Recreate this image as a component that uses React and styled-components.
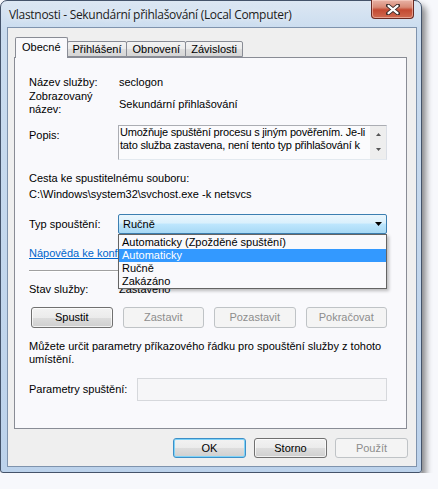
import React from 'react'
import styled, { createGlobalStyle } from 'styled-components'

const GlobalStyle = createGlobalStyle`
  html, body {
    margin: 0;
    padding: 0;
    background: #f7f8fc;
  }
  body {
    font-family: "Liberation Sans", Arial, sans-serif;
    font-size: 11px;
    color: #000;
  }
`

const Window = styled.div`
  width: 422px;
  height: 473px;
  box-sizing: border-box;
  display: flex;
  flex-direction: column;
  border: 1px solid #44536a;
  border-radius: 7px 7px 3px 3px;
  background: linear-gradient(180deg, #dce7f3 0px, #cadcef 30px, #bcd2eb 100%);
  box-shadow: 4px 5px 6px rgba(0, 0, 0, 0.45);
  padding: 0 4px 5px 6px;
`

const TitleBar = styled.div`
  height: 26px;
  display: flex;
  align-items: flex-start;
  justify-content: space-between;
`

const Title = styled.div`
  font-family: "Open Sans", "Liberation Sans", sans-serif;
  font-size: 12px;
  line-height: 16px;
  padding: 6px 0 0 2px;
  color: #1b1b1b;
  letter-spacing: -0.3px;
  white-space: nowrap;
  text-shadow: 0 0 6px rgba(255, 255, 255, 0.95);
`

const CloseButton = styled.div`
  width: 43px;
  height: 19px;
  margin: -1px 3px 0 0;
  box-sizing: border-box;
  border: 1px solid #6b2a22;
  border-top: none;
  border-radius: 0 0 4px 4px;
  background: linear-gradient(180deg, #e8b3a6 0%, #d88a76 40%, #c44a32 55%, #cf6a50 100%);
  box-shadow: inset 0 0 0 1px rgba(255, 220, 210, 0.5);
  display: flex;
  align-items: center;
  justify-content: center;
`

const Body = styled.div`
  flex: 1;
  box-sizing: border-box;
  background: #efefef;
  border: 1px solid #7f93ad;
  padding: 9px 9px 0 6px;
  display: flex;
  flex-direction: column;
`

const TabStrip = styled.div`
  height: 20px;
  display: flex;
  align-items: flex-end;
  padding-left: 1px;
  position: relative;
  z-index: 2;
`

const Tab = styled.div`
  box-sizing: border-box;
  height: ${p => (p.$active ? '21px' : '16px')};
  margin: ${p => (p.$active ? '0 -1px -1px 0' : '0 -1px 0 0')};
  padding: ${p => (p.$active ? '3px 6px 0' : '1px 5px 0')};
  border: 1px solid #898c95;
  border-bottom: ${p => (p.$active ? 'none' : '1px solid #898c95')};
  border-radius: 2px 2px 0 0;
  background: ${p => (p.$active ? '#f9f9fc' : 'linear-gradient(180deg, #f3f3f3 0%, #ebebeb 50%, #dedede 51%, #d6d6d6 100%)')};
  line-height: 13px;
  position: relative;
  z-index: ${p => (p.$active ? 2 : 1)};
`

const Panel = styled.div`
  height: 372px;
  box-sizing: border-box;
  border: 1px solid #898c95;
  background: #f9f9fc;
  padding: 18px 19px 0 14px;
  display: flex;
  flex-direction: column;
  position: relative;
  z-index: 1;
  min-width: 0;
`

const Row = styled.div`
  display: grid;
  grid-template-columns: ${p => p.$label || 90}px minmax(0, 1fr);
  align-items: ${p => p.$align || 'center'};
  margin-top: ${p => p.$top || 0}px;
  line-height: 13px;
`

const Label = styled.div`
  padding-top: ${p => p.$pad || 0}px;
`

const Value = styled.div`
  padding-top: ${p => p.$pad || 0}px;
  white-space: nowrap;
`

const Line = styled.div`
  margin-top: ${p => p.$top || 0}px;
  line-height: 13px;
  white-space: nowrap;
`

const TextBox = styled.div`
  height: 35px;
  box-sizing: border-box;
  margin-left: -1px;
  border: 1px solid #abadb3;
  border-right-color: #dbdfe6;
  border-bottom-color: #e3e9ef;
  background: #fbfbfd;
  display: flex;
`

const TextLines = styled.div`
  flex: 1;
  min-width: 0;
  overflow: hidden;
  padding-left: 1px;
  line-height: 13px;
  letter-spacing: -0.2px;
  white-space: nowrap;
`

const ScrollBar = styled.div`
  width: 16px;
  background: #eeeeee;
  display: flex;
  flex-direction: column;
  justify-content: space-between;
  align-items: center;
  padding: 7px 0 8px;
  box-sizing: border-box;
`

const ComboWrap = styled.div`
  position: relative;
  margin-left: -1px;
  z-index: 5;
`

const Combo = styled.div`
  height: 20px;
  box-sizing: border-box;
  border: 1px solid #3c7fb1;
  border-radius: 2px;
  background: linear-gradient(180deg, #eaf6fd 0%, #d9f0fc 45%, #bee6fd 50%, #a7d9f5 100%);
  display: flex;
  align-items: center;
  justify-content: space-between;
  padding: 0 4px 0 4px;
  line-height: 13px;
`

const DropList = styled.div`
  position: absolute;
  left: 0;
  right: 0;
  top: 100%;
  box-sizing: border-box;
  border: 1px solid #646464;
  background: #f9f9fc;
  padding-top: 1px;
  box-shadow: 2px 2px 3px rgba(0, 0, 0, 0.25);
`

const Option = styled.div`
  height: 13px;
  line-height: 13px;
  padding-left: 3px;
  background: ${p => (p.$selected ? '#3399ff' : 'transparent')};
  color: ${p => (p.$selected ? '#fff' : '#000')};
  white-space: nowrap;
`

const Link = styled.a`
  color: #0066cc;
  text-decoration: underline;
  line-height: 13px;
  margin-top: 13px;
  white-space: nowrap;
`

const Separator = styled.div`
  height: 1px;
  margin-top: 10px;
  background: #a0a0a0;
  box-shadow: 0 1px 0 #ffffff;
`

const ButtonRow = styled.div`
  display: grid;
  grid-template-columns: repeat(4, 1fr);
  gap: 10px;
  margin-top: 11px;
  padding-left: 2px;
`

const Button = styled.div`
  height: ${p => p.$h || 21}px;
  width: ${p => (p.$w ? p.$w + 'px' : 'auto')};
  box-sizing: border-box;
  border: 1px solid ${p => (p.$disabled ? '#bfc3c6' : p.$default ? '#3d8fc7' : '#707070')};
  border-radius: 3px;
  background: ${p => (p.$disabled ? '#f4f4f4' : 'linear-gradient(180deg, #f2f2f2 0%, #ebebeb 50%, #dddddd 51%, #cfcfcf 100%)')};
  box-shadow: ${p => (p.$default ? 'inset 0 0 0 1px #7fd3f8' : p.$disabled ? 'none' : 'inset 0 0 0 1px rgba(255,255,255,0.7)')};
  color: ${p => (p.$disabled ? '#8d8d8d' : '#000')};
  display: flex;
  align-items: center;
  justify-content: center;
  line-height: 13px;
`

const ParamInput = styled.div`
  height: 23px;
  box-sizing: border-box;
  border: 1px solid #d6d8dc;
  background: #f6f6f8;
`

const Footer = styled.div`
  display: flex;
  justify-content: flex-end;
  gap: 8px;
  margin: 9px -1px 0 0;
`

const CloseGlyph = () => (
  <svg width="14" height="11" viewBox="0 0 14 11">
    <path d="M2 1.5 L12 9.5 M12 1.5 L2 9.5" stroke="#3a2a28" strokeWidth="4" strokeLinecap="round" />
    <path d="M2.5 1.8 L11.5 9.2 M11.5 1.8 L2.5 9.2" stroke="#ffffff" strokeWidth="2.2" strokeLinecap="round" />
  </svg>
)

const Arrow = ({ up, color = '#000' }) => (
  <svg width="7" height="4" viewBox="0 0 7 4">
    <polygon points={up ? '0,4 7,4 3.5,0' : '0,0 7,0 3.5,4'} fill={color} />
  </svg>
)

const SmallArrow = ({ up }) => (
  <svg width="5" height="3" viewBox="0 0 5 3">
    <polygon points={up ? '0,3 5,3 2.5,0' : '0,0 5,0 2.5,3'} fill="#555" />
  </svg>
)

const options = [
  'Automaticky (Zpožděné spuštění)',
  'Automaticky',
  'Ručně',
  'Zakázáno',
]

export default function App() {
  return (
    <>
      <GlobalStyle />
      <Window>
        <TitleBar>
          <Title>Vlastnosti - Sekundární přihlašování (Local Computer)</Title>
          <CloseButton>
            <CloseGlyph />
          </CloseButton>
        </TitleBar>
        <Body>
          <TabStrip>
            <Tab $active>Obecné</Tab>
            <Tab>Přihlášení</Tab>
            <Tab>Obnovení</Tab>
            <Tab>Závislosti</Tab>
          </TabStrip>
          <Panel>
            <Row>
              <Label>Název služby:</Label>
              <Value>seclogon</Value>
            </Row>
            <Row $top={1}>
              <Label>Zobrazovaný<br />název:</Label>
              <Value $pad={3}>Sekundární přihlašování</Value>
            </Row>
            <Row $top={9} $align="start">
              <Label $pad={4}>Popis:</Label>
              <TextBox>
                <TextLines>
                  Umožňuje spuštění procesu s jiným pověřením. Je-li<br />
                  tato služba zastavena, není tento typ přihlašování k
                </TextLines>
                <ScrollBar>
                  <SmallArrow up />
                  <SmallArrow />
                </ScrollBar>
              </TextBox>
            </Row>
            <Line $top={12}>Cesta ke spustitelnému souboru:</Line>
            <Line $top={3}>C:\Windows\system32\svchost.exe -k netsvcs</Line>
            <Row $top={13}>
              <Label>Typ spouštění:</Label>
              <ComboWrap>
                <Combo>
                  <span>Ručně</span>
                  <Arrow />
                </Combo>
                <DropList>
                  {options.map(o => (
                    <Option key={o} $selected={o === 'Automaticky'}>{o}</Option>
                  ))}
                </DropList>
              </ComboWrap>
            </Row>
            <Link>Nápověda ke konfiguraci možností spouštění služby.</Link>
            <Separator />
            <Row $top={12}>
              <Label>Stav služby:</Label>
              <Value>Zastaveno</Value>
            </Row>
            <ButtonRow>
              <Button>Spustit</Button>
              <Button $disabled>Zastavit</Button>
              <Button $disabled>Pozastavit</Button>
              <Button $disabled>Pokračovat</Button>
            </ButtonRow>
            <Line $top={12}>
              Můžete určit parametry příkazového řádku pro spouštění služby z tohoto
            </Line>
            <Line>umístění.</Line>
            <Row $top={12} $label={108}>
              <Label>Parametry spuštění:</Label>
              <ParamInput />
            </Row>
          </Panel>
          <Footer>
            <Button $w={73} $h={20} $default>OK</Button>
            <Button $w={73} $h={20}>Storno</Button>
            <Button $w={73} $h={20} $disabled>Použít</Button>
          </Footer>
        </Body>
      </Window>
    </>
  )
}
